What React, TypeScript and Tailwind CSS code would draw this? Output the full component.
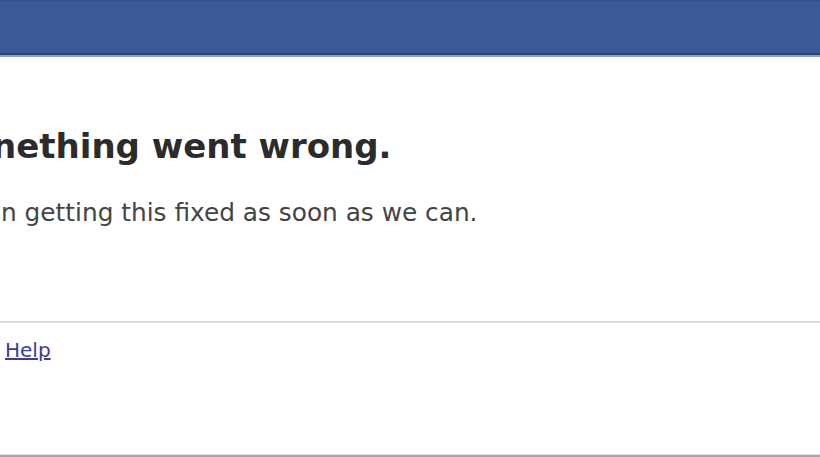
export default function App() {
  return (
    <div className="h-[457px] w-[820px] overflow-hidden bg-white flex flex-col font-['Tahoma','DejaVu_Sans',sans-serif]">
      {/* top bar */}
      <div className="h-[55px] bg-[#3b5998] border-t border-[#34508a] border-b-[2px] border-b-[#2d4373]" />
      <div className="h-[2px] bg-[#8e9fc4]" />

      <div className="flex-1 flex flex-col">
        <h1 className="mt-[67px] -ml-[8px] text-[34px] leading-[44px] font-bold text-[#2b2b2b] whitespace-nowrap">
          nething went wrong.
        </h1>
        <p className="mt-[30px] ml-[1px] text-[24.8px] leading-[30px] text-[#444] whitespace-nowrap">
          n getting this fixed as soon as we can.
        </p>
        <div className="mt-[93px] h-[2px] bg-[#dcdcdc]" />
        <div className="pt-[14px] pl-[5px]">
          <a href="#" className="text-[20px] leading-[26px] text-[#3b3b9e] underline">
            Help
          </a>
        </div>
      </div>

      <div className="h-[1px] bg-[#dbe4f0]" />
      <div className="h-[2px] bg-[#9aa8c6]" />
    </div>
  );
}
